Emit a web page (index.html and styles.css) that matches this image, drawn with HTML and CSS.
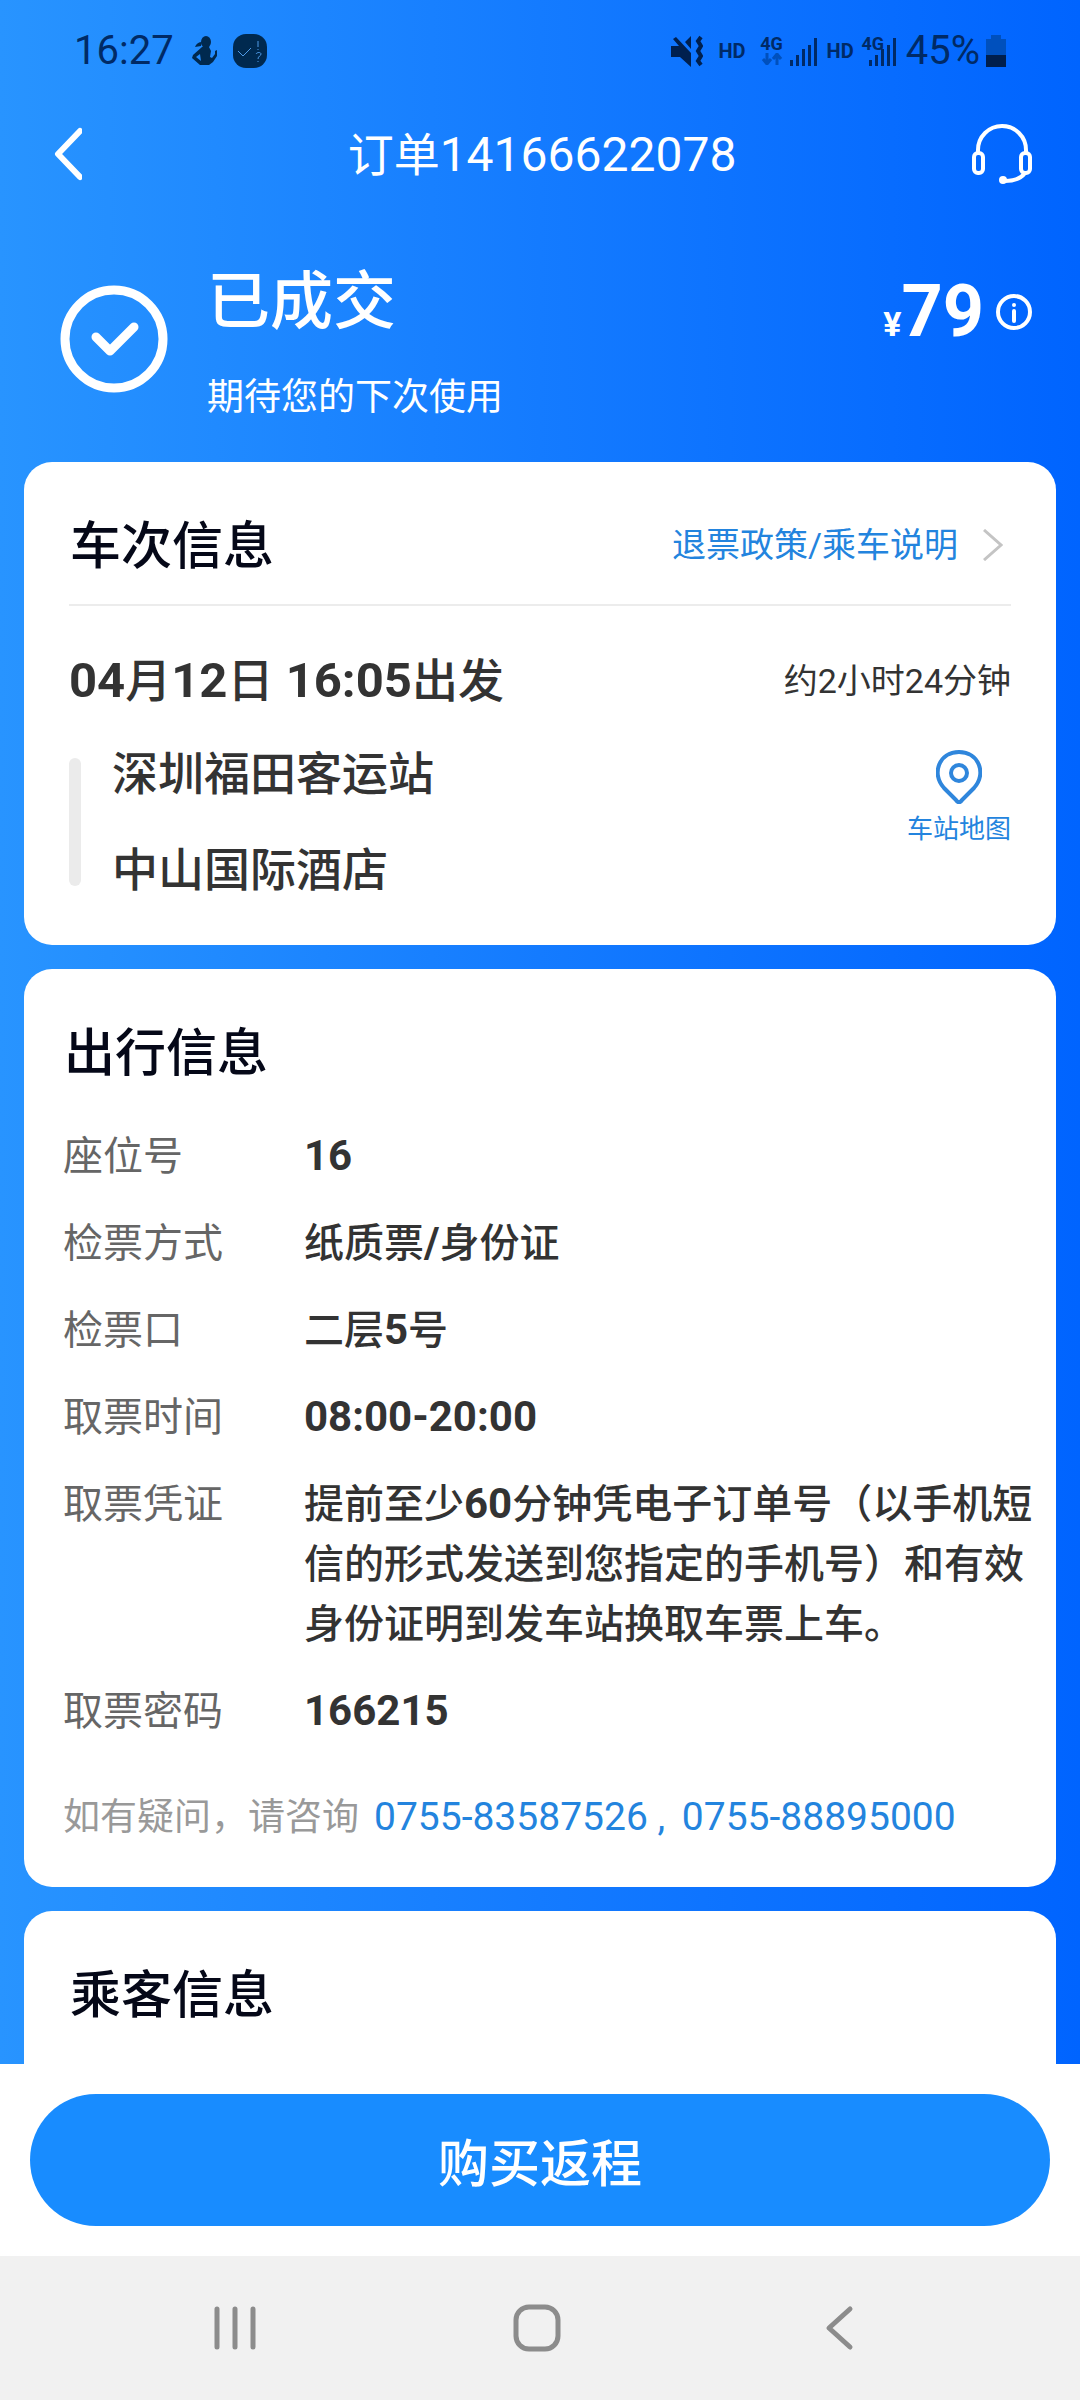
FILE: index.html
```html
<!DOCTYPE html>
<html lang="zh-CN">
<head>
<meta charset="utf-8">
<meta name="viewport" content="width=device-width, initial-scale=1">
<title>订单14166622078</title>
<link rel="stylesheet" href="styles.css">
</head>
<body>
<div class="app">
  <div class="status-bar">
    <div class="status-left">
      <span class="clock">16:27</span>
      <svg class="ic-runner" viewBox="0 0 26 30" aria-hidden="true"><ellipse cx="14" cy="6" rx="5" ry="6"/><path d="M3 11Q5 6 10 6L9 10Z"/><path d="M10 11h7l2 4-1 6 2 1 3-4v-3l2-1v6l-4 6-4 3H8L0 22l1-3Zm-6 10 5 4-1-7Z" fill-rule="evenodd"/></svg>
      <svg class="ic-badge" viewBox="0 0 34 34" aria-hidden="true"><rect width="34" height="34" rx="13"/><path class="thin" d="M5 17l5 5 8-8M25 7v6M25 15v1M23 20c1-2 5-2 5 0s-3 2-3 5M25 27v1"/></svg>
    </div>
    <div class="status-right">
      <svg class="ic-mute" viewBox="0 0 32 32" aria-hidden="true"><path d="M2 4L5 2L20 18V32L9 22H0V11H8ZM20 1v13L14 7Z"/><path class="wave" d="M30 2l-3 4 3 5-3 5 3 5-3 5 3 4"/></svg>
      <span class="hd">HD</span>
      <span class="net"><b>4G</b><svg class="ic-data" viewBox="0 0 22 12" aria-hidden="true"><path d="M6 0v10M2 6l4 5 4-5M16 12V2M12 6l4-5 4 5"/></svg></span>
      <svg class="ic-signal" viewBox="0 0 27 28" aria-hidden="true"><path d="M0 22h3v6H0ZM6 17h3v11H6ZM12 11h3v17h-3ZM18 7h3v21h-3ZM24 0h3v28h-3Z"/></svg>
      <span class="hd">HD</span>
      <span class="net net-over"><b>4G</b></span>
      <svg class="ic-signal ic-signal-over" viewBox="0 0 27 28" aria-hidden="true"><path d="M0 22h3v6H0ZM6 17h3v11H6ZM12 11h3v17h-3ZM18 7h3v21h-3ZM24 0h3v28h-3Z"/></svg>
      <span class="percent">45%</span>
      <svg class="ic-battery" viewBox="0 0 20 32" aria-hidden="true"><path class="empty" d="M5 0h10v4h5v16H0V4h5Z"/><path d="M0 20h20v12H0Z"/></svg>
    </div>
  </div>

  <header class="nav-header">
    <button class="icon-button" type="button" aria-label="返回"><svg class="ic-back" viewBox="0 0 30 54"><path d="M28 4L6 27L28 50"/></svg></button>
    <h1 class="page-title">订单<span class="order-no">14166622078</span></h1>
    <button class="icon-button support" type="button" aria-label="客服"><svg class="ic-headset" viewBox="0 0 60 60"><path d="M6 29v-3a24 24 0 0 1 48 0v3"/><rect x="2" y="29" width="9" height="20" rx="4"/><rect x="49" y="29" width="9" height="20" rx="4"/><path d="M53 49q-6 8-20 8"/><circle cx="31" cy="56" r="2"/></svg></button>
  </header>

  <section class="order-state">
    <svg class="ic-done" viewBox="0 0 108 108" aria-hidden="true"><circle cx="54" cy="54" r="49"/><path class="tick" d="M36 52L50 66L74 42"/></svg>
    <div class="state-text">
      <h2 class="state-title">已成交</h2>
      <p class="state-sub">期待您的下次使用</p>
    </div>
    <div class="price">
      <span class="amount"><small class="yen">¥</small>79</span>
      <button class="icon-button detail" type="button" aria-label="价格明细"><svg class="ic-info" viewBox="0 0 36 36"><circle cx="18" cy="18" r="16"/><path d="M18 17v10"/><path d="M18 11v0"/></svg></button>
    </div>
  </section>

  <main class="cards">
    <section class="card trip">
      <div class="card-head">
        <h2 class="card-title">车次信息</h2>
        <a class="policy" href="#policy">退票政策/乘车说明<svg class="ic-more" viewBox="0 0 20 32" aria-hidden="true"><path d="M1 1L18 16L1 31"/></svg></a>
      </div>
      <div class="depart">
        <span class="depart-time"><b>04</b>月<b>12</b>日<b> 16:05</b>出发</span>
        <span class="duration">约2小时24分钟</span>
      </div>
      <div class="route">
        <span class="route-bar"></span>
        <div class="stations">
          <p>深圳福田客运站</p>
          <p>中山国际酒店</p>
        </div>
        <a class="map-link" href="#map"><svg class="ic-pin" viewBox="0 0 46 54" aria-hidden="true"><path d="M23 52q-2 0-3-2L8 38C-5 24 3 2 23 2S51 24 38 38L26 50q-1 2-3 2Z"/><circle cx="23" cy="23" r="8"/></svg>车站地图</a>
      </div>
    </section>

    <section class="card travel">
      <h2 class="card-title">出行信息</h2>
      <dl class="details">
        <dt>座位号</dt><dd><b>16</b></dd>
        <dt>检票方式</dt><dd>纸质票<b>/</b>身份证</dd>
        <dt>检票口</dt><dd>二层<b>5</b>号</dd>
        <dt>取票时间</dt><dd><b>08:00-20:00</b></dd>
        <dt>取票凭证</dt><dd>提前至少<b>60</b>分钟凭电子订单号（以手机短信的形式发送到您指定的手机号）和有效身份证明到发车站换取车票上车。</dd>
        <dt>取票密码</dt><dd><b>166215</b></dd>
      </dl>
      <p class="help">如有疑问，请咨询<span class="phones"><a href="tel:075583587526">0755-83587526</a> , <a href="tel:075588895000">0755-88895000</a></span></p>
    </section>

    <section class="card passenger">
      <h2 class="card-title">乘客信息</h2>
    </section>
  </main>

  <footer class="bottom">
    <div class="action-bar"><button class="buy" type="button">购买返程</button></div>
    <nav class="system-nav">
      <button class="icon-button" type="button" aria-label="最近任务"><svg class="ic-nav" viewBox="0 0 48 48"><path d="M6 5v38M24 5v38M42 5v38"/></svg></button>
      <button class="icon-button" type="button" aria-label="主屏幕"><svg class="ic-nav" viewBox="0 0 48 48"><rect x="3" y="3" width="42" height="42" rx="13"/></svg></button>
      <button class="icon-button" type="button" aria-label="后退"><svg class="ic-nav" viewBox="0 0 48 48"><path d="M35 5L14 24L35 43"/></svg></button>
    </nav>
  </footer>
</div>
</body>
</html>
```
FILE: styles.css
```css
* { box-sizing: border-box; }

body, h1, h2, p, dl, dd { margin: 0; }

body {
  font-family: Roboto, "Noto Sans CJK SC", sans-serif;
  color: #333;
}

a { color: #2384de; text-decoration: none; }

svg { display: block; flex: none; }

.icon-button {
  display: flex;
  padding: 0;
  border: 0;
  background: none;
  cursor: pointer;
}

.app {
  display: flex;
  flex-direction: column;
  height: 100vh;
  background: linear-gradient(90deg, #2894ff, #147bff 50%, #0064ff);
}

/* Status bar */
.status-bar {
  display: flex;
  justify-content: space-between;
  align-items: center;
  height: 102px;
  padding: 0 74px;
  font-size: 40px;
  line-height: 48px;
  color: #002a66;
  fill: #002a66;
}
.status-left, .status-right { display: flex; align-items: center; }
.clock { margin-right: 18px; }
.ic-runner { width: 26px; height: 30px; margin-right: 15px; fill: #00294f; }
.ic-badge { width: 34px; height: 34px; fill: #00294f; }
.thin { fill: none; stroke: #4f9be8; stroke-width: 1; }
.ic-mute { width: 32px; height: 32px; margin-right: 15px; fill: #00204f; }
.wave { fill: none; stroke: #00204f; stroke-width: 4; }
.hd { font-size: 20px; line-height: 24px; font-weight: 700; }
.net { display: flex; flex-direction: column; align-items: center; width: 24px; height: 32px; margin-left: 14px; font-size: 18px; line-height: 18px; }
.ic-data { width: 22px; height: 12px; fill: none; stroke: #0050bd; stroke-width: 3; }
.ic-signal { width: 27px; height: 28px; margin: 2px 10px 0 6px; }
.net-over { margin-left: 7px; }
.ic-signal-over { margin-left: -16px; }
.percent { margin-right: 6px; }
.ic-battery { width: 20px; height: 32px; fill: #001f4d; }
.empty { fill: #0050bd; }

/* Header */
.nav-header {
  display: grid;
  grid-template-columns: 1fr auto 1fr;
  align-items: center;
  height: 104px;
  padding: 0 48px 0 52px;
  color: #fff;
}
.page-title { padding-top: 2px; font-size: 46px; line-height: 60px; font-weight: 400; }
.order-no { font-size: 48px; }
.support { justify-self: end; }
.nav-header svg, .ic-done, .ic-info {
  fill: none;
  stroke: #fff;
  stroke-linecap: round;
  stroke-linejoin: round;
}
.ic-back { width: 30px; height: 54px; stroke-width: 6; }
.ic-headset { width: 60px; height: 60px; stroke-width: 4; }

/* Order state */
.order-state {
  display: flex;
  align-items: flex-start;
  height: 256px;
  padding: 48px 48px 0 60px;
  color: #fff;
}
.ic-done { width: 108px; height: 108px; margin: 31px 39px 0 0; stroke-width: 9; }
.state-text { flex: 1; padding-top: 3px; }
.state-title { font-size: 63px; line-height: 90px; font-weight: 500; }
.state-sub { margin-top: 24px; font-size: 37px; line-height: 54px; }
.price { display: flex; align-items: center; gap: 12px; padding-top: 18px; }
.amount { font-size: 72px; line-height: 80px; font-weight: 700; }
.yen { font-size: 34px; }
.detail { margin-bottom: 12px; }
.ic-info { width: 36px; height: 36px; stroke-width: 4; }

/* Cards */
.cards {
  display: flex;
  flex: 1;
  flex-direction: column;
  gap: 24px;
  min-height: 0;
  padding: 0 24px;
  overflow: hidden;
}
.card { flex: none; border-radius: 28px; background: #fff; }
.card-title { font-size: 51px; line-height: 74px; font-weight: 500; color: #050818; }
.trip { padding: 0 45px 51px; }
.card-head {
  display: flex;
  justify-content: space-between;
  align-items: center;
  height: 144px;
  padding: 24px 8px 0 1px;
  border-bottom: 2px solid #ececec;
}
.card-head .card-title { padding-top: 3px; }
.policy { display: flex; align-items: center; gap: 25px; font-size: 34px; line-height: 50px; }
.ic-more { width: 20px; height: 32px; fill: none; stroke: #c4c4c4; stroke-width: 3; }
.depart {
  display: flex;
  justify-content: space-between;
  align-items: center;
  height: 144px;
}
.depart-time { padding-bottom: 2px; font-size: 46px; font-weight: 500; }
.depart-time b { font-size: 49px; }
.duration { font-size: 34px; }
.route { display: flex; align-items: flex-start; }
.route-bar { width: 12px; height: 128px; margin-top: 8px; border-radius: 6px; background: #ebebeb; }
.stations { flex: 1; margin-left: 31px; font-size: 46px; line-height: 48px; font-weight: 500; }
.stations p + p { margin-top: 48px; }
.map-link { display: flex; flex-direction: column; align-items: center; font-size: 26px; line-height: 50px; }
.ic-pin { width: 46px; height: 54px; fill: none; stroke: #2f86dc; stroke-width: 4; }

.travel { padding: 48px 12px 39px 40px; }
.details {
  display: grid;
  grid-template-columns: 241px 1fr;
  row-gap: 27px;
  margin: 36px 0 0 -1px;
  font-size: 40px;
  line-height: 60px;
}
.details dt { color: #666; }
.details dd { font-weight: 500; }
.details b { font-size: 42px; line-height: 42px; }
.help { margin: 46px 0 0 -1px; font-size: 37px; line-height: 60px; color: #999; }
.phones { margin-left: 15px; font-size: 39px; line-height: 40px; color: #2384de; }
.phones a + a { margin-left: 7px; }

.passenger { flex: 1 0 auto; padding: 48px 46px 0; border-radius: 28px 28px 0 0; }

/* Bottom */
.action-bar { padding: 30px; background: #fff; }
.buy {
  width: 100%;
  height: 132px;
  border: 0;
  border-radius: 66px;
  background: #188cff;
  color: #fff;
  font: 500 51px Roboto, "Noto Sans CJK SC", sans-serif;
}
.system-nav {
  display: flex;
  justify-content: space-around;
  align-items: center;
  height: 144px;
  padding: 0 90px 0 84px;
  background: #f1f1f1;
}
.ic-nav { width: 48px; height: 48px; fill: none; stroke: #8c8c8c; stroke-width: 5; stroke-linecap: round; stroke-linejoin: round; }
```
